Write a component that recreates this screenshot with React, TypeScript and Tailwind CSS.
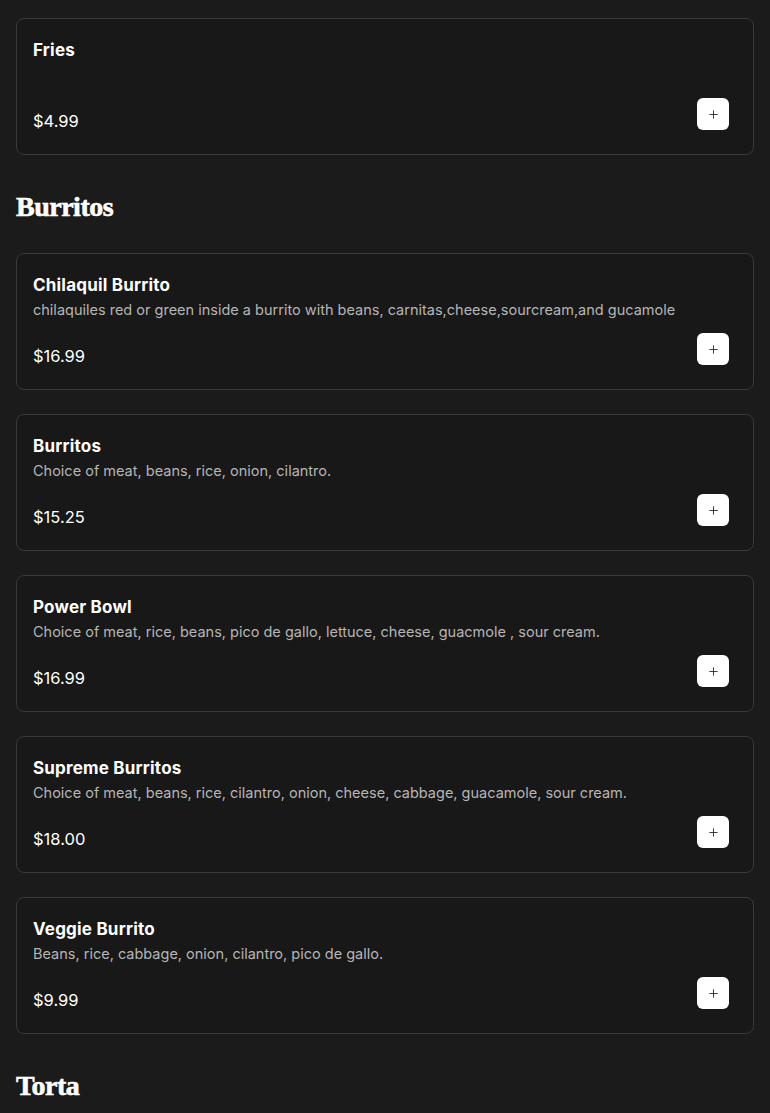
import { Plus } from "lucide-react";

type Item = { name: string; desc?: string; price: string };

const sections: { title?: string; items: Item[] }[] = [
  { items: [{ name: "Fries", price: "$4.99" }] },
  {
    title: "Burritos",
    items: [
      {
        name: "Chilaquil Burrito",
        desc: "chilaquiles red or green inside a burrito with beans, carnitas,cheese,sourcream,and gucamole",
        price: "$16.99",
      },
      { name: "Burritos", desc: "Choice of meat, beans, rice, onion, cilantro.", price: "$15.25" },
      {
        name: "Power Bowl",
        desc: "Choice of meat, rice, beans, pico de gallo, lettuce, cheese, guacmole , sour cream.",
        price: "$16.99",
      },
      {
        name: "Supreme Burritos",
        desc: "Choice of meat, beans, rice, cilantro, onion, cheese, cabbage, guacamole, sour cream.",
        price: "$18.00",
      },
      { name: "Veggie Burrito", desc: "Beans, rice, cabbage, onion, cilantro, pico de gallo.", price: "$9.99" },
    ],
  },
  { title: "Torta", items: [] },
];

function MenuCard({ item }: { item: Item }) {
  return (
    <div className="rounded-lg border border-[#3a3a3a] bg-[#181818] px-4 pb-4 pt-[18px]">
      <h3 className="text-[17px] font-bold leading-[26px] tracking-[0.2px] text-white">{item.name}</h3>
      <p className="h-6 whitespace-nowrap text-[14.5px] leading-6 text-[#b5b5b5]">{item.desc}</p>
      <div className="mt-[11px] flex items-end justify-between">
        <span className="mb-[3px] text-[16.5px] leading-7 text-white">{item.price}</span>
        <button className="mb-[8px] mr-2 flex h-8 w-8 items-center justify-center rounded-md bg-white text-[#222]">
          <Plus size={13} strokeWidth={1.6} />
        </button>
      </div>
    </div>
  );
}

export default function App() {
  return (
    <div
      className="min-h-screen bg-[#1b1b1b] px-4 pt-[18px]"
      style={{ fontFamily: "Inter, sans-serif" }}
    >
      {sections.map((s, i) => (
        <section key={i} className={i > 0 ? "mt-8" : ""}>
          {s.title && (
            <h2
              className="mb-[26px] text-[28px] font-bold leading-10 tracking-[-0.5px] text-white [-webkit-text-stroke:0.6px_white]"
              style={{ fontFamily: '"Liberation Serif", serif' }}
            >
              {s.title}
            </h2>
          )}
          <div className="flex flex-col gap-6">
            {s.items.map((it) => (
              <MenuCard key={it.name} item={it} />
            ))}
          </div>
        </section>
      ))}
    </div>
  );
}
